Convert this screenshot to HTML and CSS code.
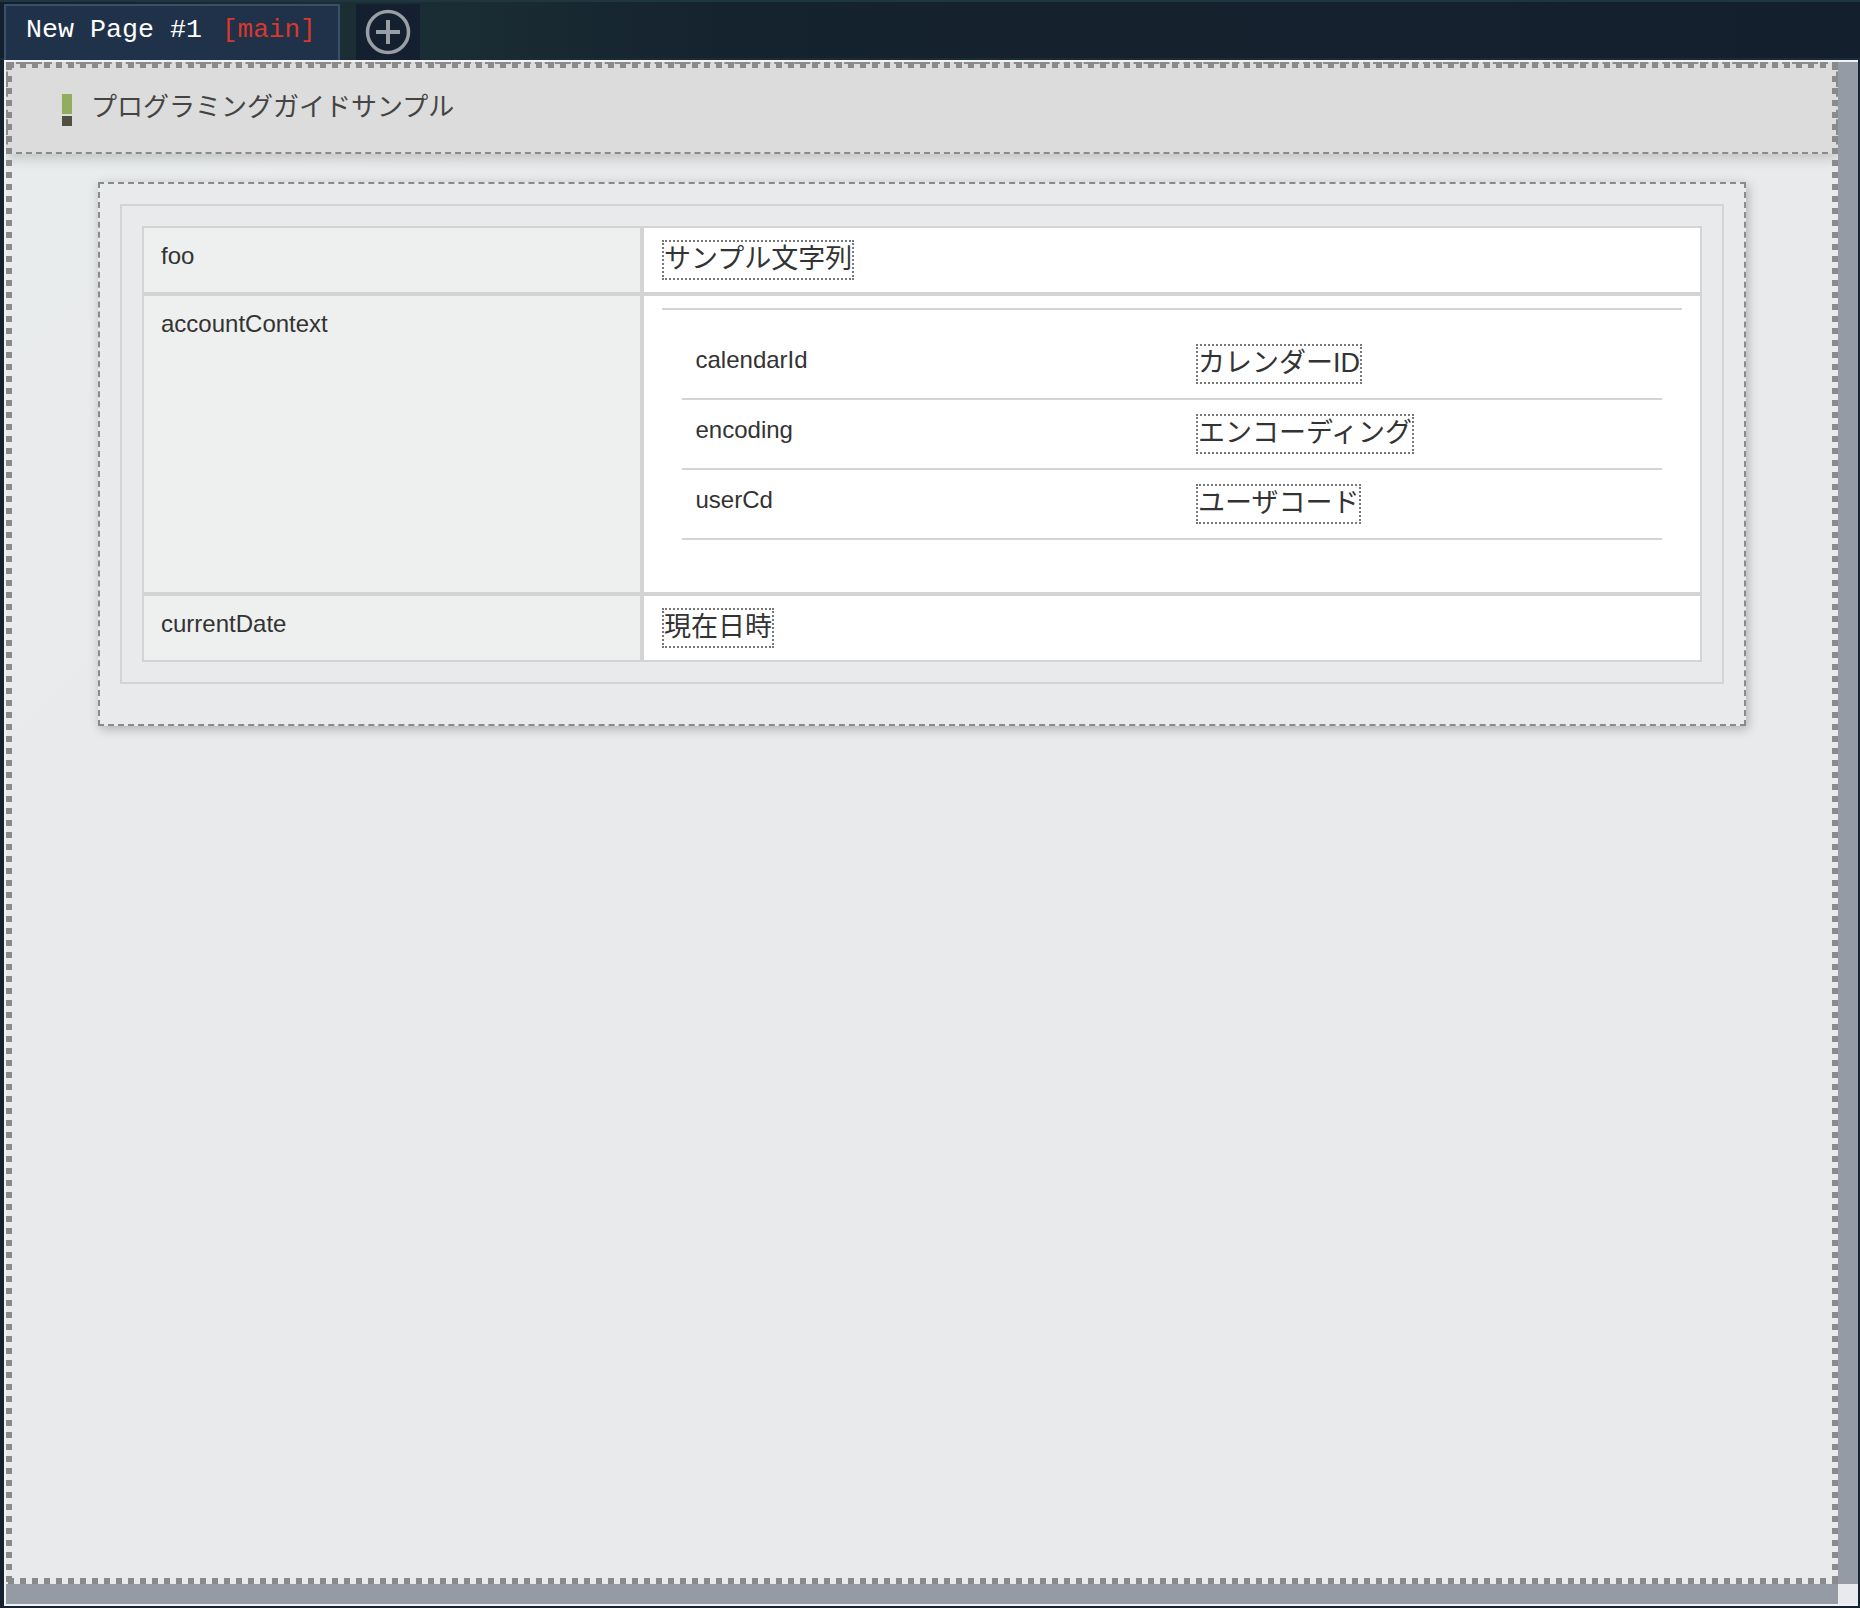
FILE: index.html
```html
<!DOCTYPE html>
<html lang="ja">
<head>
<meta charset="utf-8">
<title>New Page #1</title>
<link rel="stylesheet" href="styles.css">
</head>
<body>
<div class="topbar">
  <div class="tab">New Page #1 <span class="tab-ctx">[main]</span></div>
  <div class="add">
    <svg class="add-icon" width="46" height="46" viewBox="0 0 46 46" aria-hidden="true">
      <circle cx="23" cy="23" r="20.5" fill="none" stroke="#9a9fa6" stroke-width="3.5"/>
      <path d="M11 23H35M23 11V35" fill="none" stroke="#9a9fa6" stroke-width="4"/>
    </svg>
  </div>
</div>
<div class="frame">
  <main class="scroll">
    <header class="page-head">
      <span class="marker"><i class="marker-top"></i><i class="marker-bottom"></i></span>
      <h1 class="page-title">プログラミングガイドサンプル</h1>
    </header>
    <section class="card">
      <div class="panel">
        <div class="dl">
          <div class="key">foo</div>
          <div class="val"><span class="bind">サンプル文字列</span></div>
          <div class="key">accountContext</div>
          <div class="val">
            <div class="nested">
              <div class="nested-row">
                <div class="nested-key">calendarId</div>
                <div><span class="bind">カレンダーID</span></div>
              </div>
              <div class="nested-row">
                <div class="nested-key">encoding</div>
                <div><span class="bind">エンコーディング</span></div>
              </div>
              <div class="nested-row">
                <div class="nested-key">userCd</div>
                <div><span class="bind">ユーザコード</span></div>
              </div>
            </div>
          </div>
          <div class="key">currentDate</div>
          <div class="val"><span class="bind">現在日時</span></div>
        </div>
      </div>
    </section>
  </main>
  <div class="sb-v"></div>
  <div class="sb-h"></div>
  <div class="sb-corner"></div>
</div>
</body>
</html>
```
FILE: styles.css
```css
* { box-sizing: border-box; }
html, body { margin: 0; height: 100%; }
body {
  width: 1860px;
  height: 1608px;
  overflow: hidden;
  background: #15212f;
  font-family: "Liberation Sans", "Noto Sans CJK JP", sans-serif;
  color: #333;
  display: flex;
  flex-direction: column;
}
.topbar {
  height: 60px;
  flex: none;
  padding: 2px 0 2px 4px;
  display: flex;
  background: linear-gradient(90deg, #12202e 0, #1a2e33 340px, #1a2c34 460px, #15232e 720px, #141f2d 100%);
  border-top: 2px solid #1f3640;
  border-bottom: 2px solid #1a2a36;
}
.tab {
  width: 336px;
  height: 56px;
  margin-bottom: -2px;
  padding: 0 0 6px 20px;
  display: flex;
  align-items: center;
  gap: 20px;
  background: #1f3249;
  border: 2px solid #3a4f69;
  border-bottom: 0;
  color: #fff;
  font: 26.67px/1 "Liberation Mono", monospace;
  white-space: nowrap;
}
.tab-ctx { color: #d9382c; font-size: 26px; }
.add {
  width: 64px;
  height: 56px;
  margin: 0 0 -2px 16px;
  background: #14202f;
  display: flex;
  align-items: center;
  justify-content: center;
}
.add-icon { display: block; }
.frame {
  flex: none;
  width: 1854px;
  height: 1546px;
  margin-left: 4px;
  padding: 2px 0 2px 2px;
  background: #f1f2f4;
  display: grid;
  grid-template-columns: 1832px 20px;
  grid-template-rows: 1522px 20px;
}
.scroll {
  position: relative;
  overflow: hidden;
  background: linear-gradient(135deg, #e8eded 0, #e9ebec 250px, #e9eaec 500px);
}
.scroll::after {
  content: "";
  position: absolute;
  inset: 0;
  pointer-events: none;
  background:
    linear-gradient(90deg, #8a8a8a 50%, transparent 50%) 2px 0 / 12px 6px repeat-x,
    linear-gradient(90deg, #8a8a8a 50%, transparent 50%) 2px 100% / 12px 6px repeat-x,
    linear-gradient(180deg, #8a8a8a 50%, transparent 50%) 0 2px / 6px 12px repeat-y,
    linear-gradient(180deg, #8a8a8a 50%, transparent 50%) 100% 2px / 6px 12px repeat-y;
}
.sb-v, .sb-h { background: #949ba5; }
.sb-corner { background: #e9eaee; }
.page-head {
  height: 92px;
  display: flex;
  align-items: center;
  gap: 19px;
  padding: 0 0 0 54px;
  background: #dcdcdc;
  border: 2px dashed #8a8a8a;
  box-shadow: 0 4px 12px rgba(0, 0, 0, .18);
}
.marker { display: flex; flex-direction: column; gap: 2px; width: 10px; flex: none; margin-top: 4px; }
.marker-top { display: block; height: 20px; background: #93ad5e; }
.marker-bottom { display: block; height: 10px; background: #4f5040; }
.page-title {
  margin: 0 0 2px;
  font-size: 26px;
  font-weight: 400;
  line-height: 36px;
  color: #444;
}
.card {
  margin: 28px 92px 0;
  padding: 20px 20px 40px;
  background: #e9eaec;
  border: 2px dashed #8a8a8a;
  box-shadow: 2px 3px 10px rgba(0, 0, 0, .25);
}
.panel {
  padding: 20px;
  border: 2px solid #d4d4d4;
}
.dl {
  display: grid;
  grid-template-columns: 496px 1056px;
  gap: 4px;
  background: #d4d4d4;
  border: 2px solid #d4d4d4;
  font-size: 24px;
  line-height: 28px;
}
.key {
  padding: 14px 17px;
  background: #eeefef;
}
.val {
  padding: 12px 18px;
  background: #fff;
  min-height: 64px;
}
.bind {
  display: inline-block;
  vertical-align: top;
  height: 40px;
  border: 2px dotted #777;
  font-size: 27px;
  line-height: 35px;
  white-space: nowrap;
}
.nested {
  border-top: 2px solid #d4d4d4;
  padding: 20px 20px 40px;
}
.nested-row {
  display: grid;
  grid-template-columns: 514px 1fr;
  height: 70px;
  padding-top: 14px;
  border-bottom: 2px solid #d4d4d4;
}
.nested-key { padding: 2px 0 0 13.5px; }
```
